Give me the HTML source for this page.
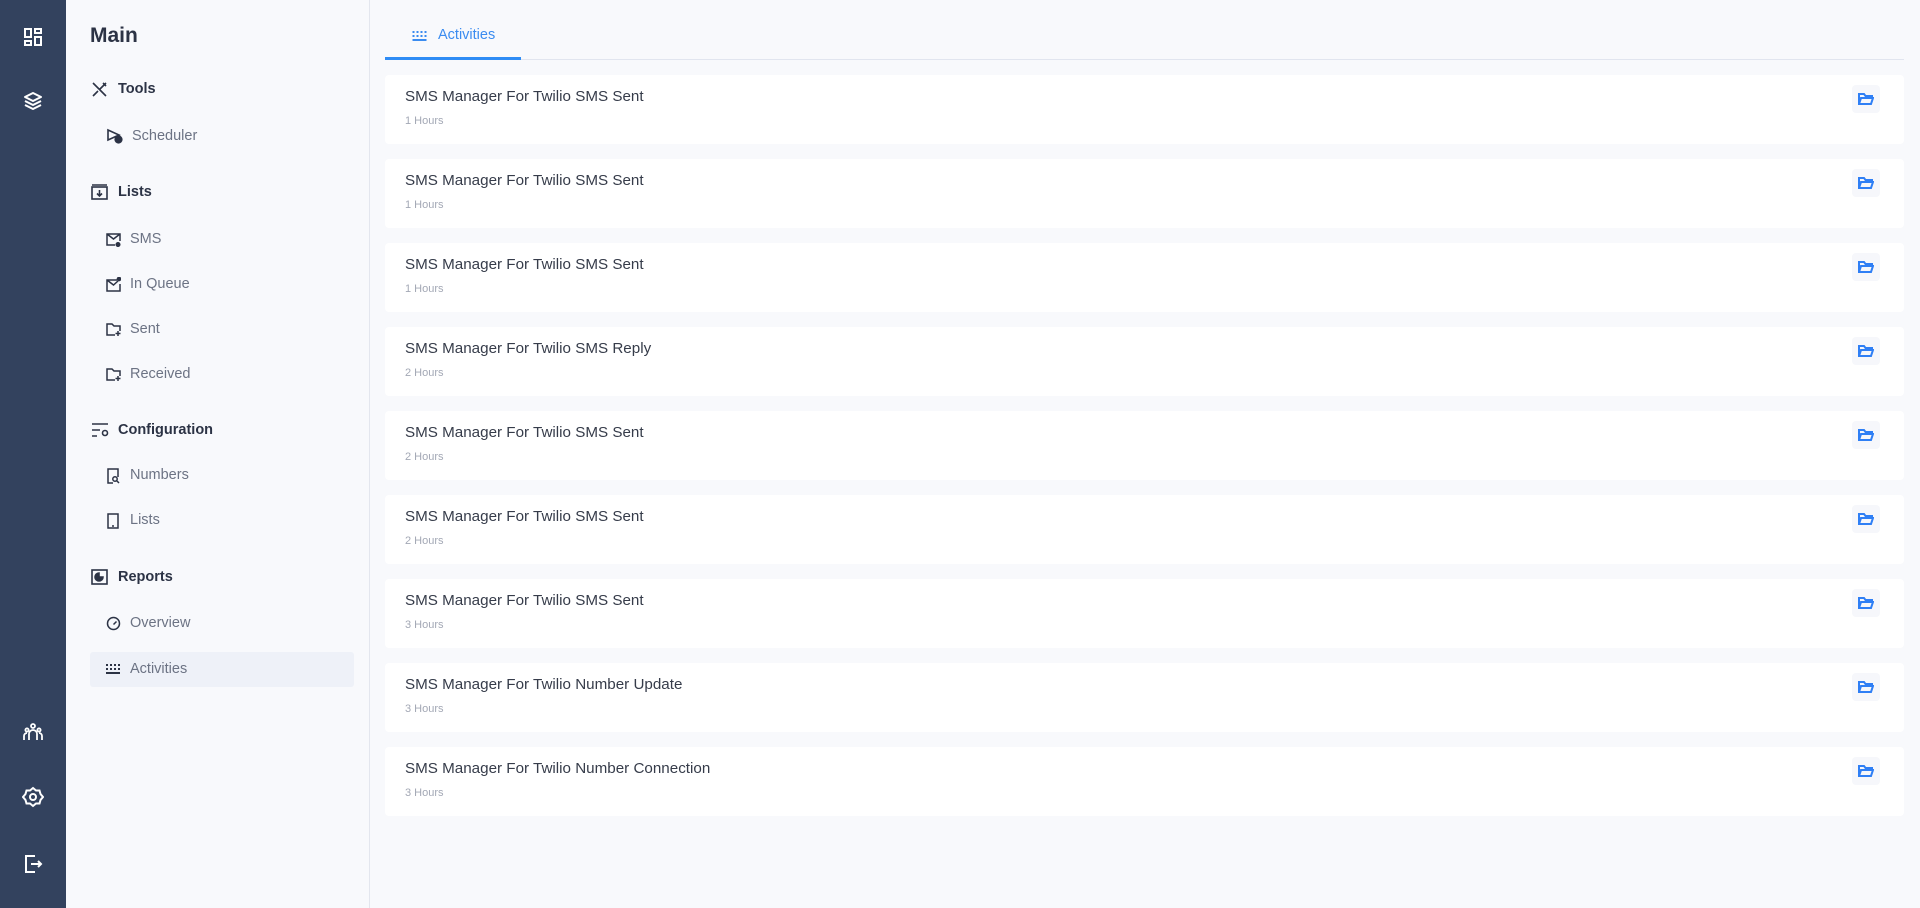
<!DOCTYPE html>
<html><head><meta charset="utf-8"><style>
*{margin:0;padding:0;box-sizing:border-box}
body{width:1920px;height:908px;background:#f8f9fc;font-family:"Liberation Sans",Arial,sans-serif;position:relative;overflow:hidden}
.rail{position:absolute;left:0;top:0;width:66px;height:908px;background:#33425e}
.rail svg{position:absolute;left:22px;width:22px;height:22px}
.panel{position:absolute;left:66px;top:0;width:304px;height:908px;border-right:1px solid #e3e6ee;background:#f8f9fc}
.abs{position:absolute}
.h{font-size:14.5px;font-weight:bold;color:#2c3345}
.it{font-size:14.5px;color:#6c7384}
.card{position:absolute;left:385px;width:1519px;height:69px;background:#fff;border-radius:4px}
.card .t{position:absolute;left:20px;top:13px;font-size:15.2px;color:#363c4a}
.card .s{position:absolute;left:20px;top:40px;font-size:11px;color:#a3a8b5}
.card .b{position:absolute;left:1467px;top:10px;width:28px;height:28px;background:#f6f7fb;border-radius:4px}
.card .b svg{position:absolute;left:6px;top:7px}
</style></head><body>
<div class="rail">
<svg style="top:26px" viewBox="0 0 22 22" fill="none" stroke="#fff" stroke-width="2"><rect x="3" y="3" width="6" height="8"/><rect x="13" y="3" width="6" height="4"/><rect x="3" y="15" width="6" height="4"/><rect x="13" y="11" width="6" height="8"/></svg>
<svg style="top:90px" viewBox="0 0 22 22" fill="none" stroke="#fff" stroke-width="2" stroke-linejoin="round"><path d="M11 3l8 4-8 4-8-4z"/><path d="M3 11l8 4 8-4"/><path d="M3 15l8 4 8-4"/></svg>
<svg style="top:721px" viewBox="0 0 22 22" fill="none" stroke="#fff" stroke-width="1.8"><circle cx="11" cy="5" r="2"/><circle cx="5" cy="9" r="1.6"/><circle cx="17" cy="9" r="1.6"/><path d="M7 19v-6a4 4 0 0 1 8 0v6M2 19v-4a3 3 0 0 1 3-3M20 19v-4a3 3 0 0 0-3-3"/></svg>
<svg style="top:786px" viewBox="0 0 22 22" fill="none" stroke="#fff" stroke-width="2"><path d="M11 2l3 2.5 3.5 0 1 3.5 2.5 3-2.5 3-1 3.5-3.5 0-3 2.5-3-2.5-3.5 0-1-3.5-2.5-3 2.5-3 1-3.5 3.5 0z"/><circle cx="11" cy="11" r="3"/></svg>
<svg style="top:853px" viewBox="0 0 22 22" fill="none" stroke="#fff" stroke-width="2"><path d="M13 3H4v16h9M9 11h10M16 8l3 3-3 3"/></svg>
</div>
<div class="panel"></div>
<div class="abs" style="left:90px;top:24px;font-size:21px;font-weight:bold;color:#2c3345">Main</div>

<svg class="abs" style="left:91px;top:81px" width="17" height="17" viewBox="0 0 17 17" fill="none" stroke="#2c3345" stroke-width="1.6"><path d="M2 2l13 13M15 2L9 8M2 15l5-5M12 2l3 3"/></svg>
<div class="abs h" style="left:118px;top:81px">Tools</div>
<svg class="abs" style="left:106px;top:128px" width="17" height="16" viewBox="0 0 17 16" fill="none" stroke="#2c3345" stroke-width="1.6"><path d="M2 2l11 5-11 5z"/><circle cx="12.5" cy="11.5" r="3.3" fill="#2c3345"/></svg>
<div class="abs it" style="left:132px;top:128px">Scheduler</div>

<svg class="abs" style="left:91px;top:184px" width="17" height="16" viewBox="0 0 17 16" fill="none" stroke="#2c3345" stroke-width="1.6"><rect x="1" y="3" width="15" height="12"/><path d="M1 1h15M8.5 6v6M6 9.5l2.5 2.5 2.5-2.5"/></svg>
<div class="abs h" style="left:118px;top:184px">Lists</div>

<svg class="abs" style="left:106px;top:232px" width="15" height="15" viewBox="0 0 15 15" fill="none" stroke="#2c3345" stroke-width="1.5"><path d="M9 13H1V2h13v7M1 2l6.5 5L14 2"/><circle cx="12" cy="12.5" r="1.8" fill="#2c3345"/></svg>
<div class="abs it" style="left:130px;top:231px">SMS</div>
<svg class="abs" style="left:106px;top:277px" width="15" height="15" viewBox="0 0 15 15" fill="none" stroke="#2c3345" stroke-width="1.5"><path d="M11 3H1v11h13V7M1 3l6.5 5L12 4"/><circle cx="13" cy="2" r="1.6" fill="#2c3345"/></svg>
<div class="abs it" style="left:130px;top:276px">In Queue</div>
<svg class="abs" style="left:106px;top:322px" width="15" height="15" viewBox="0 0 15 15" fill="none" stroke="#2c3345" stroke-width="1.5"><path d="M9 13H1V2h5l2 2h6v5M12 9v5M9.5 11.5h5"/></svg>
<div class="abs it" style="left:130px;top:321px">Sent</div>
<svg class="abs" style="left:106px;top:367px" width="15" height="15" viewBox="0 0 15 15" fill="none" stroke="#2c3345" stroke-width="1.5"><path d="M9 13H1V2h5l2 2h6v5M12 9v5M9.5 11.5h5"/></svg>
<div class="abs it" style="left:130px;top:366px">Received</div>

<svg class="abs" style="left:91px;top:422px" width="18" height="16" viewBox="0 0 18 16" fill="none" stroke="#2c3345" stroke-width="1.6"><path d="M1 2h16M1 8h8M1 14h5"/><circle cx="14" cy="11" r="2.5"/></svg>
<div class="abs h" style="left:118px;top:422px">Configuration</div>
<svg class="abs" style="left:107px;top:468px" width="13" height="16" viewBox="0 0 13 16" fill="none" stroke="#2c3345" stroke-width="1.5"><path d="M6 15H1V1h10v8"/><circle cx="8" cy="11" r="2.2"/><path d="M9.5 12.5l2.5 2.5"/></svg>
<div class="abs it" style="left:130px;top:467px">Numbers</div>
<svg class="abs" style="left:107px;top:513px" width="13" height="16" viewBox="0 0 13 16" fill="none" stroke="#2c3345" stroke-width="1.5"><rect x="1" y="1" width="10" height="14"/><path d="M5 13h2"/></svg>
<div class="abs it" style="left:130px;top:512px">Lists</div>

<svg class="abs" style="left:91px;top:569px" width="17" height="16" viewBox="0 0 17 16" fill="none" stroke="#2c3345" stroke-width="1.6"><rect x="1" y="1" width="15" height="14"/><path d="M8 4a4 4 0 1 0 4 4H8z" fill="#2c3345"/></svg>
<div class="abs h" style="left:118px;top:569px">Reports</div>
<svg class="abs" style="left:106px;top:616px" width="15" height="15" viewBox="0 0 15 15" fill="none" stroke="#2c3345" stroke-width="1.5"><circle cx="7.5" cy="7.5" r="6"/><path d="M7.5 8.5l3-3"/></svg>
<div class="abs it" style="left:130px;top:615px">Overview</div>
<div class="abs" style="left:90px;top:652px;width:264px;height:35px;background:#eef1f8;border-radius:3px"></div>
<svg class="abs" style="left:106px;top:663px" width="14" height="12" viewBox="0 0 14 12" fill="#2c3345"><rect x="0" y="1" width="2" height="2"/><rect x="4" y="1" width="2" height="2"/><rect x="8" y="1" width="2" height="2"/><rect x="12" y="1" width="2" height="2"/><rect x="0" y="5" width="2" height="2"/><rect x="4" y="5" width="2" height="2"/><rect x="8" y="5" width="2" height="2"/><rect x="12" y="5" width="2" height="2"/><rect x="0" y="9" width="14" height="2"/></svg>
<div class="abs it" style="left:130px;top:661px">Activities</div>

<div class="abs" style="left:385px;top:59px;width:1519px;height:1px;background:#e1e5ef"></div>
<div class="abs" style="left:385px;top:57px;width:136px;height:3px;background:#2f8cf5"></div>
<svg class="abs" style="left:412px;top:30px" width="15" height="12" viewBox="0 0 14 12" fill="#3b8cf0"><rect x="0" y="1" width="2" height="2"/><rect x="4" y="1" width="2" height="2"/><rect x="8" y="1" width="2" height="2"/><rect x="12" y="1" width="2" height="2"/><rect x="0" y="5" width="2" height="2"/><rect x="4" y="5" width="2" height="2"/><rect x="8" y="5" width="2" height="2"/><rect x="12" y="5" width="2" height="2"/><rect x="0" y="9" width="14" height="2"/></svg>
<div class="abs" style="left:438px;top:27px;font-size:14.5px;color:#3b8cf0">Activities</div>

<div class="card" style="top:75px"><div class="t">SMS Manager For Twilio SMS Sent</div><div class="s">1 Hours</div><div class="b"><svg width="16" height="14" viewBox="0 0 16 14" fill="none" stroke="#2f7ff5" stroke-width="2"><path d="M1 12V2h5l1.5 2H14v2M1 12l2-6h12l-2 6z"/></svg></div></div>
<div class="card" style="top:159px"><div class="t">SMS Manager For Twilio SMS Sent</div><div class="s">1 Hours</div><div class="b"><svg width="16" height="14" viewBox="0 0 16 14" fill="none" stroke="#2f7ff5" stroke-width="2"><path d="M1 12V2h5l1.5 2H14v2M1 12l2-6h12l-2 6z"/></svg></div></div>
<div class="card" style="top:243px"><div class="t">SMS Manager For Twilio SMS Sent</div><div class="s">1 Hours</div><div class="b"><svg width="16" height="14" viewBox="0 0 16 14" fill="none" stroke="#2f7ff5" stroke-width="2"><path d="M1 12V2h5l1.5 2H14v2M1 12l2-6h12l-2 6z"/></svg></div></div>
<div class="card" style="top:327px"><div class="t">SMS Manager For Twilio SMS Reply</div><div class="s">2 Hours</div><div class="b"><svg width="16" height="14" viewBox="0 0 16 14" fill="none" stroke="#2f7ff5" stroke-width="2"><path d="M1 12V2h5l1.5 2H14v2M1 12l2-6h12l-2 6z"/></svg></div></div>
<div class="card" style="top:411px"><div class="t">SMS Manager For Twilio SMS Sent</div><div class="s">2 Hours</div><div class="b"><svg width="16" height="14" viewBox="0 0 16 14" fill="none" stroke="#2f7ff5" stroke-width="2"><path d="M1 12V2h5l1.5 2H14v2M1 12l2-6h12l-2 6z"/></svg></div></div>
<div class="card" style="top:495px"><div class="t">SMS Manager For Twilio SMS Sent</div><div class="s">2 Hours</div><div class="b"><svg width="16" height="14" viewBox="0 0 16 14" fill="none" stroke="#2f7ff5" stroke-width="2"><path d="M1 12V2h5l1.5 2H14v2M1 12l2-6h12l-2 6z"/></svg></div></div>
<div class="card" style="top:579px"><div class="t">SMS Manager For Twilio SMS Sent</div><div class="s">3 Hours</div><div class="b"><svg width="16" height="14" viewBox="0 0 16 14" fill="none" stroke="#2f7ff5" stroke-width="2"><path d="M1 12V2h5l1.5 2H14v2M1 12l2-6h12l-2 6z"/></svg></div></div>
<div class="card" style="top:663px"><div class="t">SMS Manager For Twilio Number Update</div><div class="s">3 Hours</div><div class="b"><svg width="16" height="14" viewBox="0 0 16 14" fill="none" stroke="#2f7ff5" stroke-width="2"><path d="M1 12V2h5l1.5 2H14v2M1 12l2-6h12l-2 6z"/></svg></div></div>
<div class="card" style="top:747px"><div class="t">SMS Manager For Twilio Number Connection</div><div class="s">3 Hours</div><div class="b"><svg width="16" height="14" viewBox="0 0 16 14" fill="none" stroke="#2f7ff5" stroke-width="2"><path d="M1 12V2h5l1.5 2H14v2M1 12l2-6h12l-2 6z"/></svg></div></div>
</body></html>
